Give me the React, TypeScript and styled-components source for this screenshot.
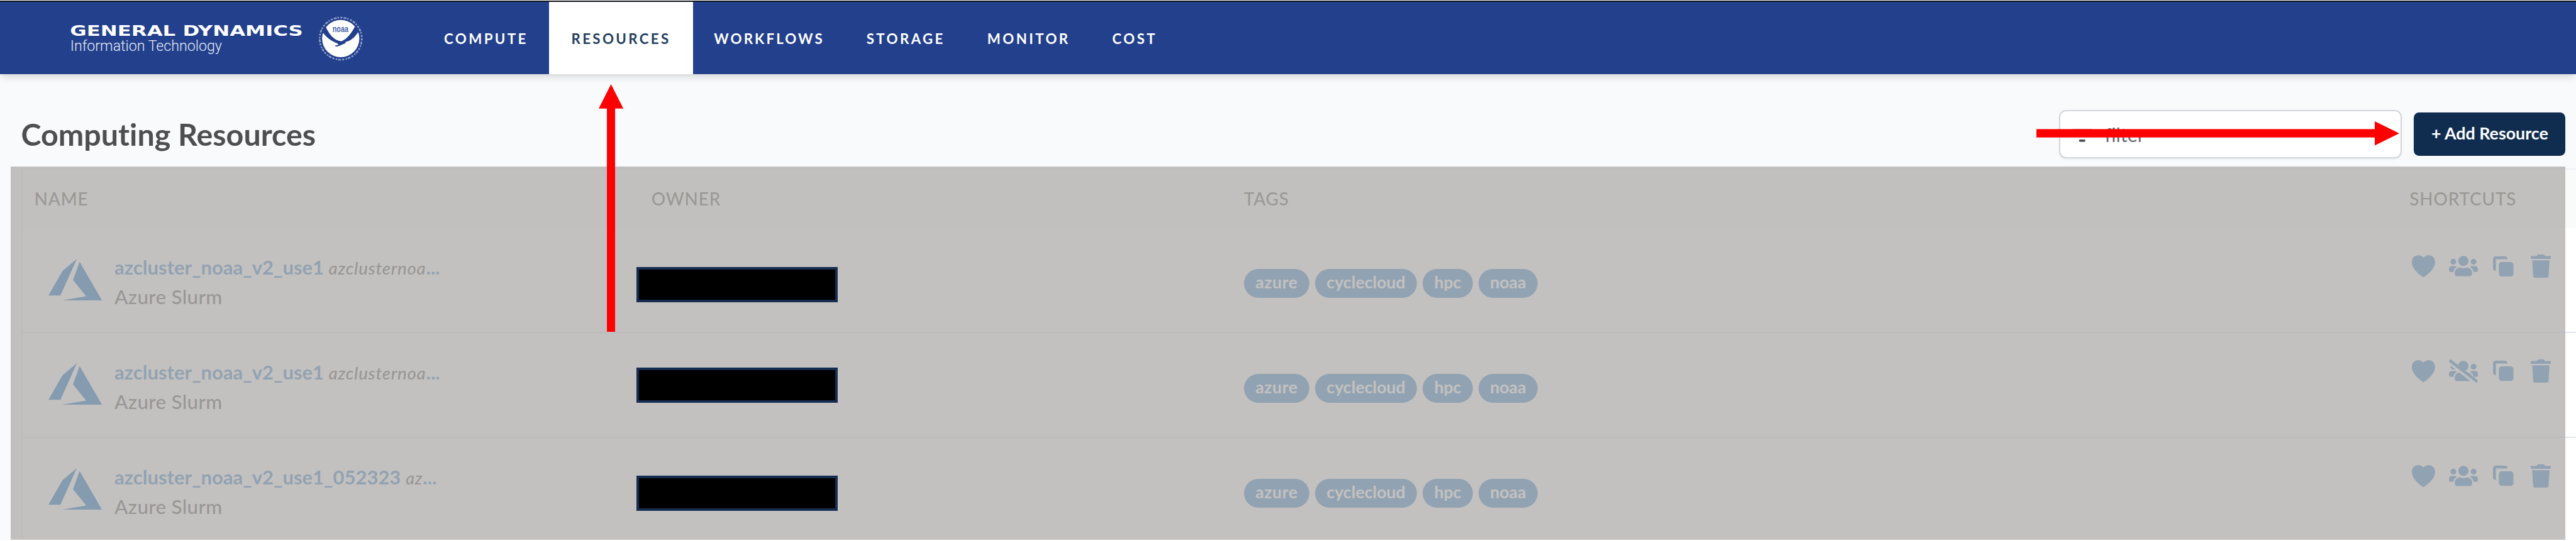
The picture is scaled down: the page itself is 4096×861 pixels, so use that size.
import React from 'react';
import styled, { createGlobalStyle } from 'styled-components';
import { FaTrash, FaUsers, FaUsersSlash } from 'react-icons/fa';

/* The layout is 440rem wide, so everything scales with the window. */
const GlobalStyle = createGlobalStyle`
  *, *::before, *::after { box-sizing: border-box; }
  html { font-size: calc(100vw / 440); }
  body {
    margin: 0;
    background: #ffffff;
    overflow: hidden;
    font-family: Lato, "Liberation Sans", sans-serif;
    font-variant-ligatures: none;
  }
`;

const Page = styled.div`
  position: relative;
  width: 100vw;
  height: 92.3rem;
  overflow: hidden;
  display: flex;
  flex-direction: column;
  background: #f9fafc;
`;

const TopBar = styled.header`
  flex: none;
  display: flex;
  height: 12.65rem;
  border-top: 0.2rem solid #ffffff;
  background: #23408d;
  box-shadow: 0 0.8rem 1.2rem -0.2rem rgba(0, 0, 0, 0.1), 0 0.4rem 0.8rem -0.2rem rgba(0, 0, 0, 0.06);

  &::before {
    content: '';
    width: 100%;
    height: 0.25rem;
    margin-right: -100%;
    background: #101318;
  }
`;

const Brand = styled.div`
  flex: none;
  width: 72.25rem;
  padding: 2.4rem 0 0 11.6rem;
`;

const BrandArt = styled.svg`
  display: block;
  width: 51rem;
  height: 8.2rem;
`;

const Nav = styled.nav`
  display: flex;
  padding-top: 0.25rem;
`;

const Tab = styled.a<{ $active?: boolean; $tracking?: number }>`
  display: flex;
  align-items: center;
  padding: 0.25rem ${p => (p.$active ? 3.78 : 3.6)}rem 0;
  font-size: 2.4rem;
  font-weight: 700;
  line-height: 1;
  letter-spacing: ${p => p.$tracking ?? 0.36}rem;
  color: ${p => (p.$active ? '#24405f' : '#ffffff')};
  background: ${p => (p.$active ? '#ffffff' : 'transparent')};
`;

const Toolbar = styled.div`
  flex: none;
  display: flex;
  align-items: center;
  height: 16.15rem;
  padding: 6.15rem 1.8rem 1.7rem 3.6rem;
`;

const Title = styled.h1`
  margin: 0 auto 0 0;
  font-size: 5.2rem;
  font-weight: 700;
  line-height: 1;
  color: #4f4f50;
`;

const FilterBox = styled.label`
  display: flex;
  align-items: center;
  gap: 2rem;
  width: 58.6rem;
  height: 8.3rem;
  margin-right: 2.05rem;
  padding: 0 2rem;
  border: 0.22rem solid #d3d6dd;
  border-radius: 1.2rem;
  background: #ffffff;
  box-shadow: 0 0.2rem 0.4rem rgba(0, 0, 0, 0.06);
`;

const FilterIcon = styled.svg`
  width: 3.6rem;
  height: 2.6rem;
`;

const Placeholder = styled.span`
  padding-top: 0.4rem;
  font-size: 3.28rem;
  line-height: 1;
  color: #666a73;
`;

const AddButton = styled.button`
  width: 25.87rem;
  height: 7.35rem;
  padding: 0 0 0.2rem;
  border: 0;
  border-radius: 0.9rem;
  background: #102d50;
  color: #ffffff;
  font-family: inherit;
  font-size: 2.88rem;
  font-weight: 700;
  line-height: 1;
  white-space: nowrap;
`;

const TableArea = styled.main`
  position: relative;
  flex: 1;
  padding-left: 3.65rem;

  /* dimming layer over the whole list */
  &::after {
    content: '';
    position: absolute;
    top: -0.3rem;
    right: 1.8rem;
    bottom: 0;
    left: 1.8rem;
    background: rgba(175, 172, 170, 0.75);
  }
`;

const Table = styled.div`
  height: 100%;
  border-top: 0.25rem solid #eff0f6;
  border-left: 0.25rem solid #e7e9f0;
  background: #ffffff;
`;

const columns = '107.2rem 101.4rem 198.6rem 1fr';

const HeadRow = styled.div`
  display: grid;
  grid-template-columns: ${columns};
  align-items: center;
  height: 10rem;
  padding-bottom: 0.2rem;
  background: #fafafa;
`;

const HeadCell = styled.span<{ $indent?: number }>`
  padding: 0.3rem 0 0 ${p => p.$indent ?? 0}rem;
  font-size: 3rem;
  font-weight: 500;
  line-height: 1;
  letter-spacing: 0.09rem;
  color: #5f605b;
`;

const Row = styled.div`
  display: grid;
  grid-template-columns: ${columns};
  align-items: start;
  height: 17.93rem;
  border-bottom: 0.25rem solid #e4e4ee;
`;

const NameCell = styled.div`
  display: flex;
  align-items: flex-start;
  gap: 2.1rem;
  padding: 4.3rem 0 0 4.4rem;
`;

const AzureLogo = styled.svg`
  flex: none;
  width: 9.2rem;
  height: 7.1rem;
  margin-top: 0.9rem;
`;

const NameText = styled.div`
  line-height: 4.82rem;
  white-space: nowrap;
`;

const NameLink = styled.div`
  font-size: 3.33rem;
  font-weight: 700;
  color: #3b83cb;
`;

const Slug = styled.em`
  font-size: 2.97rem;
  font-weight: 500;
  letter-spacing: 0.08rem;
  color: #5b5660;
`;

const Kind = styled.div`
  font-size: 3.38rem;
  font-weight: 500;
  letter-spacing: 0.03rem;
  color: #5b5660;
`;

const OwnerMask = styled.div<{ $top: number }>`
  position: relative;
  z-index: 1;
  width: 34.4rem;
  height: 6.05rem;
  margin: ${p => p.$top}rem 0 0 -2.4rem;
  border: 0.5rem solid #162d52;
  background: #000000;
`;

const Tags = styled.div`
  display: flex;
  gap: 0.97rem;
  padding-top: 6.97rem;
`;

const Tag = styled.span<{ $tracking?: number }>`
  height: 4.93rem;
  padding: 0 1.97rem;
  border-radius: 2.47rem;
  background: #3b83cb;
  color: #ffffff;
  font-size: 2.87rem;
  font-weight: 700;
  line-height: 4.6rem;
  letter-spacing: ${p => p.$tracking ?? 0}rem;
`;

const Shortcuts = styled.div`
  display: flex;
  align-items: center;
  height: 5rem;
  margin-top: 4rem;
  padding-left: 0.9rem;
  color: #3b83cb;
`;

const Shortcut = styled.span<{ $w: number; $h: number; $gap?: number }>`
  display: flex;
  width: ${p => p.$w}rem;
  margin-left: ${p => p.$gap ?? 0}rem;

  svg {
    display: block;
    width: 100%;
    height: ${p => p.$h}rem;
    fill: currentColor;
  }
`;

const UpArrow = styled.svg`
  position: absolute;
  z-index: 2;
  left: 102.3rem;
  top: 14.35rem;
  width: 4.2rem;
  height: 42.4rem;
`;

const RightArrow = styled.svg`
  position: absolute;
  z-index: 2;
  left: 347.8rem;
  top: 20.73rem;
  width: 62rem;
  height: 4.14rem;
`;

const tabs = [
  { label: 'COMPUTE' },
  { label: 'RESOURCES', active: true },
  { label: 'WORKFLOWS', tracking: 0.33 },
  { label: 'STORAGE' },
  { label: 'MONITOR' },
  { label: 'COST' },
];

const tags = [
  { label: 'azure', tracking: 0.06 },
  { label: 'cyclecloud' },
  { label: 'hpc' },
  { label: 'noaa' },
];

const resources = [
  { name: 'azcluster_noaa_v2_use1', slug: 'azclusternoa', shared: true, maskTop: 6.65 },
  { name: 'azcluster_noaa_v2_use1', slug: 'azclusternoa', shared: false, maskTop: 5.9 },
  { name: 'azcluster_noaa_v2_use1_052323', slug: 'az', shared: true, maskTop: 6.4 },
];

function BrandLogo() {
  return (
    <BrandArt viewBox="0 0 510 82">
      <text x="3.5" y="37" fontFamily="DejaVu Sans" fontWeight="700" fontSize="25" fill="#fff" textLength="398" lengthAdjust="spacingAndGlyphs">
        GENERAL DYNAMICS
      </text>
      <text x="4" y="61.8" fontFamily="Roboto" fontWeight="300" fontSize="26" fill="#e6ebf6" textLength="259" lengthAdjust="spacingAndGlyphs">
        Information Technology
      </text>
      <g transform="translate(466 41.3)">
        <circle r="36" fill="none" stroke="#8d9ec9" strokeWidth="2.8" strokeDasharray="3.2 2.1 5 1.6 2.4 2.6" />
        <circle r="31.8" fill="#fff" />
        <path
          d="M-32.5 -13 L-26 -21 C-20 -8 -12 3 1 4.5 C11 1 19 -10 24 -20.5 L31.5 -13.5 C24 -2 17 4 8.5 5.5 L8 8 C3 9 -2 13.5 -9 13.5 L-9.5 11.5 C-4 11.5 -3 9.5 -5.5 8.3 C-17 4 -25 -2 -32.5 -13 Z"
          fill="#23408d"
        />
        <text x="-14" y="-10.8" fontFamily="Liberation Sans" fontWeight="700" fontSize="16.5" fill="#4b66a8" textLength="27" lengthAdjust="spacingAndGlyphs">
          noaa
        </text>
      </g>
    </BrandArt>
  );
}

function HeartIcon() {
  return (
    <svg viewBox="0 0 119 113" preserveAspectRatio="none">
      <path d="M59.5 113 C50 107 0 75 0 36 C0 14 14 1 33 1 C46 1 54 8 59.5 13 C65 8 73 1 86 1 C105 1 119 14 119 36 C119 75 69 107 59.5 113 Z" />
    </svg>
  );
}

function CopyIcon() {
  return (
    <svg viewBox="0 0 105 103" preserveAspectRatio="none">
      <path d="M15 0 H63 Q70 0 76 14 H15 V74 L4 70 Q0 68 0 62 V15 Q0 0 15 0 Z" />
      <rect x="30" y="29" width="75" height="74" rx="15" />
    </svg>
  );
}

export default function App() {
  return (
    <>
      <GlobalStyle />
      <Page>
        <TopBar>
          <Brand>
            <BrandLogo />
          </Brand>
          <Nav>
            {tabs.map(t => (
              <Tab key={t.label} $active={t.active} $tracking={t.tracking}>
                {t.label}
              </Tab>
            ))}
          </Nav>
        </TopBar>

        <Toolbar>
          <Title>Computing Resources</Title>
          <FilterBox>
            <FilterIcon viewBox="0 0 36 26">
              <path d="M2 5.4 H34 M8 13 H28" fill="none" stroke="#7c7f85" strokeWidth="3.4" strokeLinecap="round" />
              <path d="M14.5 23.5 H21.5" fill="none" stroke="#4c4f55" strokeWidth="4" strokeLinecap="round" />
            </FilterIcon>
            <Placeholder>filter</Placeholder>
          </FilterBox>
          <AddButton>+ Add Resource</AddButton>
        </Toolbar>

        <TableArea>
          <Table>
            <HeadRow>
              <HeadCell $indent={2}>NAME</HeadCell>
              <HeadCell $indent={0.2}>OWNER</HeadCell>
              <HeadCell>TAGS</HeadCell>
              <HeadCell $indent={0.5}>SHORTCUTS</HeadCell>
            </HeadRow>
            {resources.map((r, i) => (
              <Row key={i}>
                <NameCell>
                  <AzureLogo viewBox="0 0 92 71">
                    <path d="M48.6 0 L24 20.7 L0 62.5 H20.5 Z M53.2 4.7 L91.5 71 H23 L64.5 64 L42 36.3 Z" fill="#0569c4" />
                  </AzureLogo>
                  <NameText>
                    <NameLink>
                      {r.name} <Slug>{r.slug}</Slug>...
                    </NameLink>
                    <Kind>Azure Slurm</Kind>
                  </NameText>
                </NameCell>
                <OwnerMask $top={r.maskTop} />
                <Tags>
                  {tags.map(t => (
                    <Tag key={t.label} $tracking={t.tracking}>
                      {t.label}
                    </Tag>
                  ))}
                </Tags>
                <Shortcuts>
                  <Shortcut $w={3.96} $h={3.8}>
                    <HeartIcon />
                  </Shortcut>
                  <Shortcut $w={4.95} $h={3.96} $gap={2.37}>
                    {r.shared ? <FaUsers /> : <FaUsersSlash />}
                  </Shortcut>
                  <Shortcut $w={3.5} $h={3.47} $gap={2.6}>
                    <CopyIcon />
                  </Shortcut>
                  <Shortcut $w={3.46} $h={3.97} $gap={2.9}>
                    <FaTrash />
                  </Shortcut>
                </Shortcuts>
              </Row>
            ))}
          </Table>
        </TableArea>

        <UpArrow viewBox="0 0 42 424">
          <path d="M21 0 L42 41.5 H28 V424 H14 V41.5 H0 Z" fill="#ff0000" />
        </UpArrow>
        <RightArrow viewBox="0 0 620 41.4">
          <path d="M620 20.7 L578 41.4 V27.7 H0 V13.5 H578 V0 Z" fill="#ff0000" />
        </RightArrow>
      </Page>
    </>
  );
}
